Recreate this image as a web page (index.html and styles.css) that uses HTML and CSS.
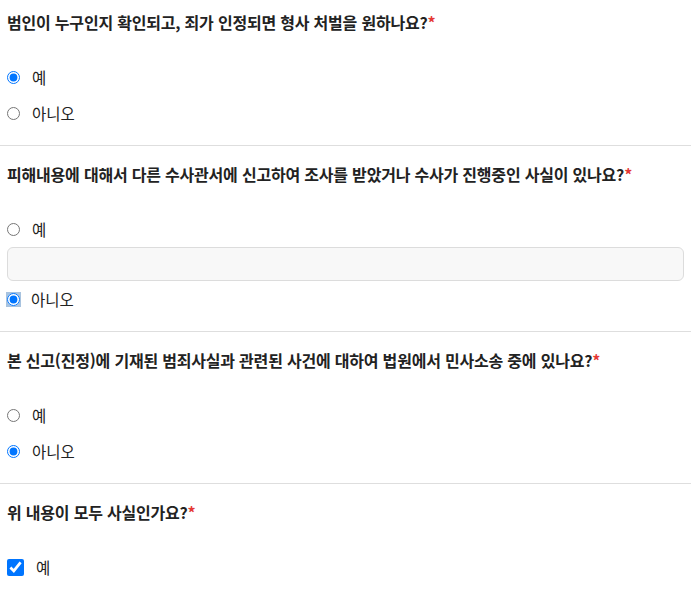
FILE: index.html
```html
<!DOCTYPE html>
<html lang="ko">
<head>
<meta charset="utf-8">
<link rel="stylesheet" href="styles.css">
</head>
<body>
<form class="survey">
  <section class="q q-first">
    <h3 class="q-title">범인이 누구인지 확인되고, 죄가 인정되면 형사 처벌을 원하나요?<span class="req">*</span></h3>
    <div class="opts">
      <label class="opt"><input type="radio" name="q1" checked><span>예</span></label>
      <label class="opt"><input type="radio" name="q1"><span>아니오</span></label>
    </div>
  </section>
  <section class="q">
    <h3 class="q-title">피해내용에 대해서 다른 수사관서에 신고하여 조사를 받았거나 수사가 진행중인 사실이 있나요?<span class="req">*</span></h3>
    <div class="opts">
      <label class="opt"><input type="radio" name="q2"><span>예</span></label>
      <input class="text-in" type="text">
      <label class="opt"><span class="sel"><input type="radio" name="q2" checked></span><span>아니오</span></label>
    </div>
  </section>
  <section class="q">
    <h3 class="q-title">본 신고(진정)에 기재된 범죄사실과 관련된 사건에 대하여 법원에서 민사소송 중에 있나요?<span class="req">*</span></h3>
    <div class="opts">
      <label class="opt"><input type="radio" name="q3"><span>예</span></label>
      <label class="opt"><input type="radio" name="q3" checked><span>아니오</span></label>
    </div>
  </section>
  <section class="q q-last">
    <h3 class="q-title">위 내용이 모두 사실인가요?<span class="req">*</span></h3>
    <div class="opts">
      <label class="opt"><input class="chk" type="checkbox" checked><span>예</span></label>
    </div>
  </section>
</form>
</body>
</html>
```
FILE: styles.css
```css
html, body {
  margin: 0;
  padding: 0;
  background: #fff;
}
body {
  font-family: "Noto Sans CJK KR", "Noto Sans", sans-serif;
  color: #222;
}
.survey {
  display: flex;
  flex-direction: column;
}
.q {
  padding: 17px 7px 14px;
  border-bottom: 1px solid #dedede;
}
.q-first {
  padding-top: 11px;
}
.q-last {
  border-bottom: none;
}
.q-title {
  margin: 0;
  font-size: 16px;
  line-height: 22px;
  font-weight: 700;
  color: #222;
  letter-spacing: -0.2px;
}
.req {
  color: #e53935;
  font-weight: 700;
}
.opts {
  margin-top: 26px;
  display: flex;
  flex-direction: column;
}
.opt {
  display: flex;
  align-items: center;
  height: 36px;
  font-size: 15.5px;
  color: #222;
}
.opt input[type="radio"] {
  margin: 0 12px 0 0;
  width: 13px;
  height: 13px;
}
.sel {
  display: inline-flex;
  align-items: center;
  justify-content: center;
  width: 15px;
  height: 15px;
  margin: 0 10px 0 -1px;
  background: #a8c3df;
}
.sel input[type="radio"] {
  margin: 0;
}
.opt .chk {
  margin: 0 12px 0 0;
  width: 17px;
  height: 17px;
}
.text-in {
  box-sizing: border-box;
  height: 34px;
  width: 100%;
  margin: 0;
  border: 1px solid #dcdcdc;
  border-radius: 6px;
  background: #f8f8f8;
  font-family: inherit;
}
```
